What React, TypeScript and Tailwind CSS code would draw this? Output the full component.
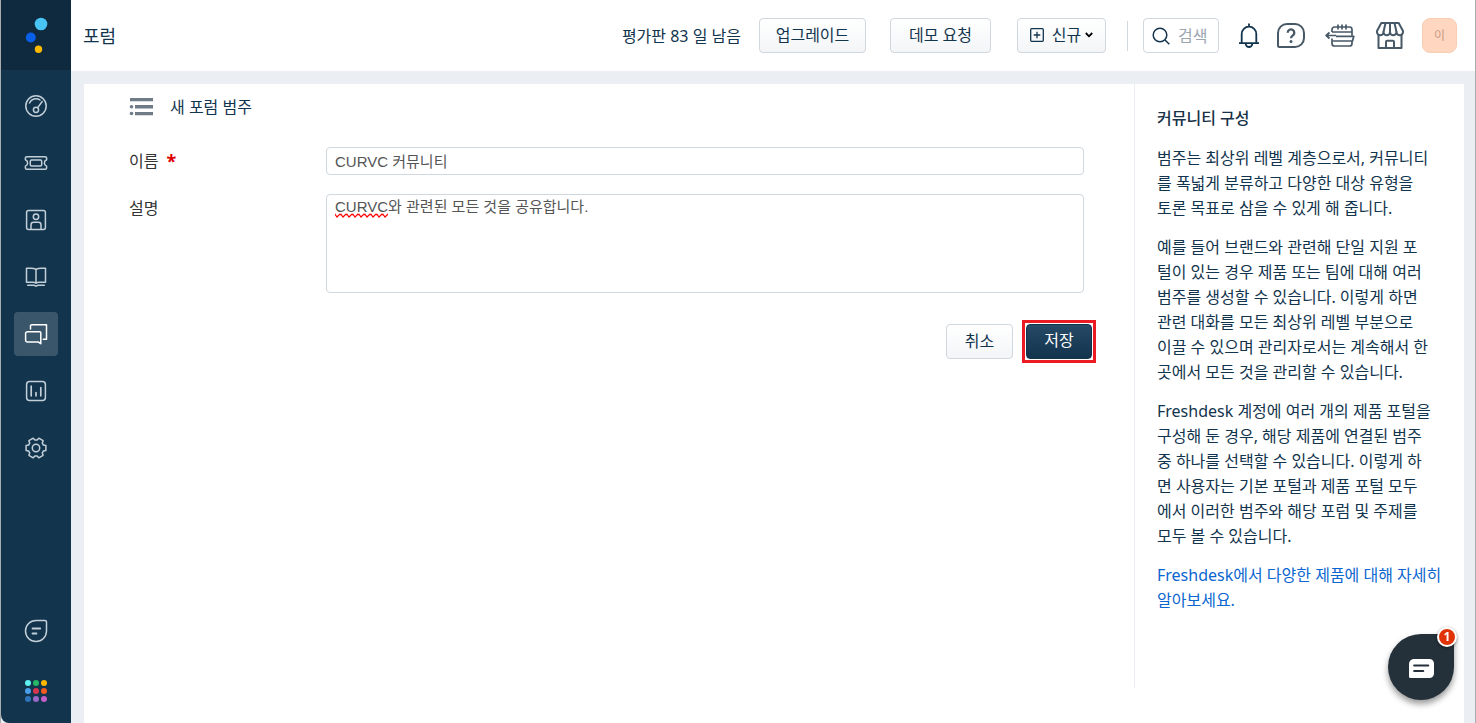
import type { ReactNode } from 'react'

function Icon({ size = 24, children }: { size?: number; children: ReactNode }) {
  return (
    <svg
      width={size}
      height={size}
      viewBox="0 0 24 24"
      fill="none"
      stroke="currentColor"
      strokeWidth="1.5"
      strokeLinecap="round"
      strokeLinejoin="round"
      aria-hidden="true"
    >
      {children}
    </svg>
  )
}

const navItems = [
  {
    label: '대시보드',
    icon: (
      <>
        <circle cx="12" cy="12" r="10.2" />
        <path d="M5.5 9a7 7 0 0 1 10.500-3M18.200 7.500l-4.500 6.100" />
        <circle cx="12" cy="15.8" r="2.6" />
      </>
    ),
  },
  {
    label: '티켓',
    icon: (
      <>
        <path d="M2.8 5.7h18.4a1.4 1.4 0 0 1 1.4 1.4v1.7a3.4 3.4 0 0 0 0 6.4v1.7a1.4 1.4 0 0 1-1.4 1.4H2.8a1.4 1.4 0 0 1-1.4-1.4v-1.7a3.4 3.4 0 0 0 0-6.4V7.1a1.4 1.4 0 0 1 1.4-1.4z" />
        <rect x="6.3" y="9" width="11.4" height="6" rx="1.2" />
      </>
    ),
  },
  {
    label: '연락처',
    icon: (
      <>
        <rect x="2.6" y="2.6" width="18.8" height="18.8" rx="2" />
        <circle cx="12" cy="8.7" r="2.7" />
        <path d="M7 21.2v-4.4a2.6 2.6 0 0 1 2.6-2.6h4.8a2.6 2.6 0 0 1 2.6 2.6v4.4" />
      </>
    ),
  },
  {
    label: '솔루션',
    icon: (
      <>
        <path d="M12 4.2c-1.5-.6-3.2-.9-5-.9H2.5v14H9c1.2 0 2.2.3 3 .9.8-.6 1.8-.9 3-.9h6.5v-14H17c-1.8 0-3.5.3-5 .9zM12 4.2v13.7" />
        <path d="M3.7 20.300h5.800c1 0 1.800.4 2.500 1 .7-.6 1.500-1 2.500-1h5.800" />
      </>
    ),
  },
  {
    label: '포럼',
    active: true,
    icon: (
      <>
        <path d="M6.5 7V4a1.3 1.3 0 0 1 1.3-1.3h14.7v14.5h-3.2" />
        <path d="M3.5 9.7h12.3a1 1 0 0 1 1 1v11L14.2 20H3.5A1.9 1.9 0 0 1 1.6 18v-6.4a1.9 1.9 0 0 1 1.9-1.9z" />
      </>
    ),
  },
  {
    label: '분석',
    icon: (
      <>
        <rect x="2.6" y="2.6" width="18.8" height="18.8" rx="3" />
        <path d="M7.2 7.2v9.6M12 13.5v3.3M16.8 8.700v8.100" strokeWidth="1.7" />
      </>
    ),
  },
  {
    label: '관리',
    icon: (
      <>
        <path d="M21.9 9.5v5l-2.5.5-1.1 1.9.8 2.4-4.3 2.5-1.7-1.900h-2.200l-1.700 1.900-4.300-2.500.8-2.400L4.600 15l-2.500-.5v-5L4.600 9l1.100-1.900-.8-2.400 4.300-2.500 1.700 1.900h2.200l1.700-1.900 4.300 2.500-.8 2.400L19.400 9z" />
        <circle cx="12" cy="12" r="3.7" />
      </>
    ),
  },
]

const appDots = [
  '#5ff0f2', '#27b866', '#ffb800',
  '#4a9de8', '#d6364f', '#f35b1f',
  '#2f74b8', '#9a68c8', '#c25fc8',
]

function Sidebar() {
  return (
    <nav className="flex w-[70px] shrink-0 flex-col items-center rounded-bl-lg bg-[#12344d] text-[#c3cfd8]">
      <a href="#" aria-label="Freshworks" className="flex h-[70px] w-full items-center justify-center bg-[#0f2a3f]">
        <svg width="24" height="36" viewBox="0 0 24 36" aria-hidden="true">
          <circle cx="17" cy="7" r="6.3" fill="#48c4f5" />
          <circle cx="6.8" cy="20.5" r="5" fill="#0a5fe8" />
          <circle cx="14.5" cy="32.3" r="3.7" fill="#ffb900" />
        </svg>
      </a>
      <div className="mt-3.5 flex flex-col gap-[13px]">
        {navItems.map((item) => (
          <a
            key={item.label}
            href="#"
            aria-label={item.label}
            className={
              item.active
                ? 'flex size-11 items-center justify-center rounded bg-[#3a566b] text-white'
                : 'flex size-11 items-center justify-center rounded'
            }
          >
            <Icon>{item.icon}</Icon>
          </a>
        ))}
      </div>
      <div className="mt-auto mb-[21px] flex flex-col items-center gap-[37px]">
        <button type="button" aria-label="채팅">
          <Icon>
            <path d="M12 1.5h9A1.5 1.5 0 0 1 22.500 3v9A10.500 10.500 0 1 1 12 1.500z" />
            <path d="M8.500 9.500h7.700M8.500 14.500h4" strokeWidth="1.8" />
          </Icon>
        </button>
        <button type="button" aria-label="앱 전환" className="grid grid-cols-3 gap-0.5">
          {appDots.map((color) => (
            <span key={color} className="size-1.5 rounded-full" style={{ backgroundColor: color }} />
          ))}
        </button>
      </div>
    </nav>
  )
}

const lightButton =
  'flex h-[35px] items-center justify-center rounded border border-[#cfd7df] bg-linear-to-b from-white to-[#f3f5f7] pb-0.5 text-base whitespace-nowrap text-[#12344d]'

function Header() {
  return (
    <header className="flex h-[71px] shrink-0 items-center bg-white pr-[18px] pl-3 text-[#12344d]">
      <h1 className="text-lg">포럼</h1>
      <span className="ml-auto whitespace-nowrap">평가판 83 일 남음</span>
      <button type="button" className={`${lightButton} ml-[18px] w-[107px]`}>
        업그레이드
      </button>
      <button type="button" className={`${lightButton} ml-6 w-[101px]`}>
        데모 요청
      </button>
      <button type="button" className={`${lightButton} ml-[26px] w-[89px] gap-2`}>
        <svg width="14" height="14" viewBox="0 0 14 14" fill="none" stroke="currentColor" strokeWidth="1.3" aria-hidden="true">
          <rect x=".7" y=".7" width="12.6" height="12.6" rx="1" />
          <path d="M7 3.7v6.6M3.7 7h6.6" />
        </svg>
        <span>신규</span>
        <svg width="8" height="6" viewBox="0 0 8 6" fill="none" stroke="#000" strokeWidth="1.8" className="-ml-1" aria-hidden="true">
          <path d="M.8 1L4 4.3 7.2 1" />
        </svg>
      </button>
      <span className="ml-[21px] h-[30px] w-px bg-[#cfd7df]" />
      <label className="ml-[15px] flex h-[35px] w-[76px] items-center rounded border border-[#cfd7df] pl-2">
        <svg width="18" height="18" viewBox="0 0 18 18" fill="none" stroke="currentColor" strokeWidth="1.5" className="shrink-0" aria-hidden="true">
          <circle cx="8" cy="8" r="6.8" />
          <path d="M13 13l4.3 4.3" />
        </svg>
        <input
          type="text"
          aria-label="검색"
          placeholder="검색"
          className="ml-2 h-full w-full min-w-0 bg-transparent text-base outline-none placeholder:text-[#9aa5af]"
        />
      </label>
      <button type="button" aria-label="알림" className="ml-[18px]">
        <svg width="24" height="26" viewBox="0 0 24 26" fill="none" stroke="currentColor" strokeWidth="1.8" aria-hidden="true">
          <path d="M4.7 20v-9a7.3 7.3 0 0 1 14.6 0v9M2 20.2h20M12 .5v3M8.7 20.7a3.3 3.3 0 0 0 6.6 0" />
        </svg>
      </button>
      <button type="button" aria-label="도움말" className="ml-4 text-[#475867]">
        <svg width="28" height="26" viewBox="0 0 28 26" fill="none" stroke="currentColor" strokeWidth="2" aria-hidden="true">
          <path d="M10 1h8a9 9 0 0 1 9 9v5a9 9 0 0 1-9 9H2.5A1.5 1.5 0 0 1 1 22.5V10a9 9 0 0 1 9-9z" />
          <path d="M10.7 9.7a3.3 3.3 0 1 1 5.2 2.7c-1.3.9-1.9 1.3-1.9 2.8" strokeWidth="2.3" />
          <circle cx="14" cy="18.5" r="1.5" fill="currentColor" stroke="none" />
        </svg>
      </button>
      <button type="button" aria-label="Freshdesk 전환" className="ml-5 text-[#475867]">
        <svg width="30" height="24" viewBox="0 0 30 24" fill="none" stroke="currentColor" strokeWidth="1.7" strokeLinejoin="round" aria-hidden="true">
          <path d="M7 8V5.500A2.500 2.500 0 0 1 9.500 3h15A2.500 2.500 0 0 1 27 5.500v6.300M7 14.500v5A2.500 2.500 0 0 0 9.500 22h15a2.500 2.500 0 0 0 2.500-2.500v-2.700" />
          <path d="M13 .500v5M17 .500v5M21 .500v5M7 8h20M1.200 11.500h10M4.500 8.500l-3.300 3 3.300 3" />
          <path d="M11 12.300h17.800L27.500 17H7.500" />
        </svg>
      </button>
      <button type="button" aria-label="마켓플레이스" className="ml-5 text-[#475867]">
        <svg width="30" height="28" viewBox="0 0 30 28" fill="none" stroke="currentColor" strokeWidth="2" strokeLinejoin="round" aria-hidden="true">
          <path d="M6.3 1h17.4L28 9v1a3.2 3.2 0 0 1-6.5 0 3.25 3.25 0 0 1-6.5 0 3.25 3.25 0 0 1-6.5 0A3.2 3.2 0 0 1 2 10V9z" />
          <path d="M10.500 1l-2 9M15 1v9M19.500 1l2 9M3.500 13v13h23V13M11 26v-6a1.200 1.200 0 0 1 1.200-1.200h5.600A1.200 1.200 0 0 1 19 20v6" />
        </svg>
      </button>
      <button
        type="button"
        className="ml-[17px] flex size-[35px] items-center justify-center rounded-lg border border-[#f8cdb2] bg-[#ffd6c0] text-xs text-[#c79c86]"
      >
        이
      </button>
    </header>
  )
}

function CategoryForm() {
  return (
    <form className="min-w-0 flex-1 pr-[42px] pl-[45px]" onSubmit={(e) => e.preventDefault()}>
      <div className="mt-[11px] flex items-center text-[#12344d]">
        <svg width="25" height="18" viewBox="0 0 25 18" fill="#6f7c87" aria-hidden="true">
          <path d="M1 0h23v3.2H1zM6 7h18v3.5H6zM6 14h18v3.2H6z" />
          <circle cx="2.5" cy="8.7" r="1.8" />
          <circle cx="2.5" cy="15.5" r="1.8" />
        </svg>
        <h2 className="ml-4 text-base">새 포럼 범주</h2>
      </div>

      <div className="mt-7 mr-2 flex">
        <label htmlFor="name" className="flex w-[197px] shrink-0 items-center text-[#333]">
          이름
          <span className="ml-2 text-lg leading-6 font-bold text-[#e00000]">*</span>
        </label>
        <input
          id="name"
          defaultValue="CURVC 커뮤니티"
          className="h-7 min-w-0 flex-1 rounded-sm border border-[#cfd7df] px-2 pb-0.5 font-['Liberation_Sans','Noto_Sans_CJK_KR',sans-serif] text-[15px] text-[#555]"
        />
      </div>

      <div className="mt-[19px] mr-2 flex">
        <label htmlFor="description" className="w-[197px] shrink-0 pt-0.5 text-[#333]">
          설명
        </label>
        <div className="relative min-w-0 flex-1">
          <textarea
            id="description"
            spellCheck={false}
            defaultValue="CURVC와 관련된 모든 것을 공유합니다."
            className="block h-[99px] w-full resize-none rounded-sm border border-[#cfd7df] px-2 font-['Liberation_Sans','Noto_Sans_CJK_KR',sans-serif] text-[15px] leading-6 text-[#555]"
          />
          <svg width="53" height="5" className="pointer-events-none absolute top-[19px] left-[9px]" aria-hidden="true">
            <defs>
              <pattern id="squiggle" width="6" height="5" patternUnits="userSpaceOnUse">
                <path d="M-1 0L2 4 5 1 8 4" fill="none" stroke="#f00" strokeWidth="1.2" />
              </pattern>
            </defs>
            <rect width="53" height="5" fill="url(#squiggle)" />
          </svg>
        </div>
      </div>

      <div className="mt-[27px] flex items-center justify-end gap-[9px]">
        <button type="button" className={`${lightButton} w-[67px]`}>
          취소
        </button>
        <div className="-mr-1 border-3 border-[#ea1b22] p-px">
          <button
            type="submit"
            className="flex h-[35px] w-[66px] items-center justify-center rounded border border-[#12344d] bg-linear-to-b from-[#264966] to-[#12344d] pb-1 text-base text-white"
          >
            저장
          </button>
        </div>
      </div>
    </form>
  )
}

function HelpPanel() {
  return (
    <aside className="w-[330px] shrink-0 border-l border-[#ebeff3] pt-[22px] pl-[22px] leading-[25px] whitespace-nowrap text-[#12344d]">
      <h2 className="mb-[15px] text-base leading-[25px] font-medium text-[#183247]">커뮤니티 구성</h2>
      <div className="flex flex-col gap-3.5">
        <p>
          범주는 최상위 레벨 계층으로서, 커뮤니티
          <br />를 폭넓게 분류하고 다양한 대상 유형을
          <br />
          토론 목표로 삼을 수 있게 해 줍니다.
        </p>
        <p>
          예를 들어 브랜드와 관련해 단일 지원 포
          <br />
          털이 있는 경우 제품 또는 팀에 대해 여러
          <br />
          범주를 생성할 수 있습니다. 이렇게 하면
          <br />
          관련 대화를 모든 최상위 레벨 부분으로
          <br />
          이끌 수 있으며 관리자로서는 계속해서 한
          <br />
          곳에서 모든 것을 관리할 수 있습니다.
        </p>
        <p>
          Freshdesk 계정에 여러 개의 제품 포털을
          <br />
          구성해 둔 경우, 해당 제품에 연결된 범주
          <br />
          중 하나를 선택할 수 있습니다. 이렇게 하
          <br />
          면 사용자는 기본 포털과 제품 포털 모두
          <br />
          에서 이러한 범주와 해당 포럼 및 주제를
          <br />
          모두 볼 수 있습니다.
        </p>
        <a href="#" className="text-[#0b66cf]">
          Freshdesk에서 다양한 제품에 대해 자세히
          <br />
          알아보세요.
        </a>
      </div>
    </aside>
  )
}

function ChatLauncher() {
  return (
    <button
      type="button"
      aria-label="채팅 열기"
      className="fixed right-[22px] bottom-[23px] flex size-[66px] items-center justify-center rounded-full rounded-tr-sm bg-[#25313a] pt-1 pl-0.5 shadow-[0_4px_6px_rgba(0,0,0,0.4)]"
    >
      <svg width="26" height="20" viewBox="0 0 26 20" aria-hidden="true">
        <path d="M5 0h15.5A4.5 4.5 0 0 1 25 4.5v10a4.5 4.5 0 0 1-4.5 4.5h-19A1.5 1.5 0 0 1 0 17.5V5a5 5 0 0 1 5-5z" fill="#fff" />
        <path d="M5.2 6.5h14M5.2 12h9" stroke="#25313a" strokeWidth="2.2" strokeLinecap="round" />
      </svg>
      <span className="absolute -top-[7px] -right-[3px] flex size-5 items-center justify-center rounded-full border-2 border-white bg-[#e03408] text-xs leading-none font-bold text-white shadow-[0_1px_3px_rgba(0,0,0,0.5)]">
        1
      </span>
    </button>
  )
}

export default function App() {
  return (
    <div className="flex min-h-screen border-r border-l border-[#a9adb0] bg-[#ebeef3] font-['Noto_Sans','Noto_Sans_CJK_KR',sans-serif] text-base">
      <Sidebar />
      <div className="flex min-w-0 flex-1 flex-col">
        <Header />
        <main className="mt-[13px] mr-[11px] ml-[13px] flex flex-1 bg-white pb-[35px]">
          <CategoryForm />
          <HelpPanel />
        </main>
      </div>
      <ChatLauncher />
    </div>
  )
}
